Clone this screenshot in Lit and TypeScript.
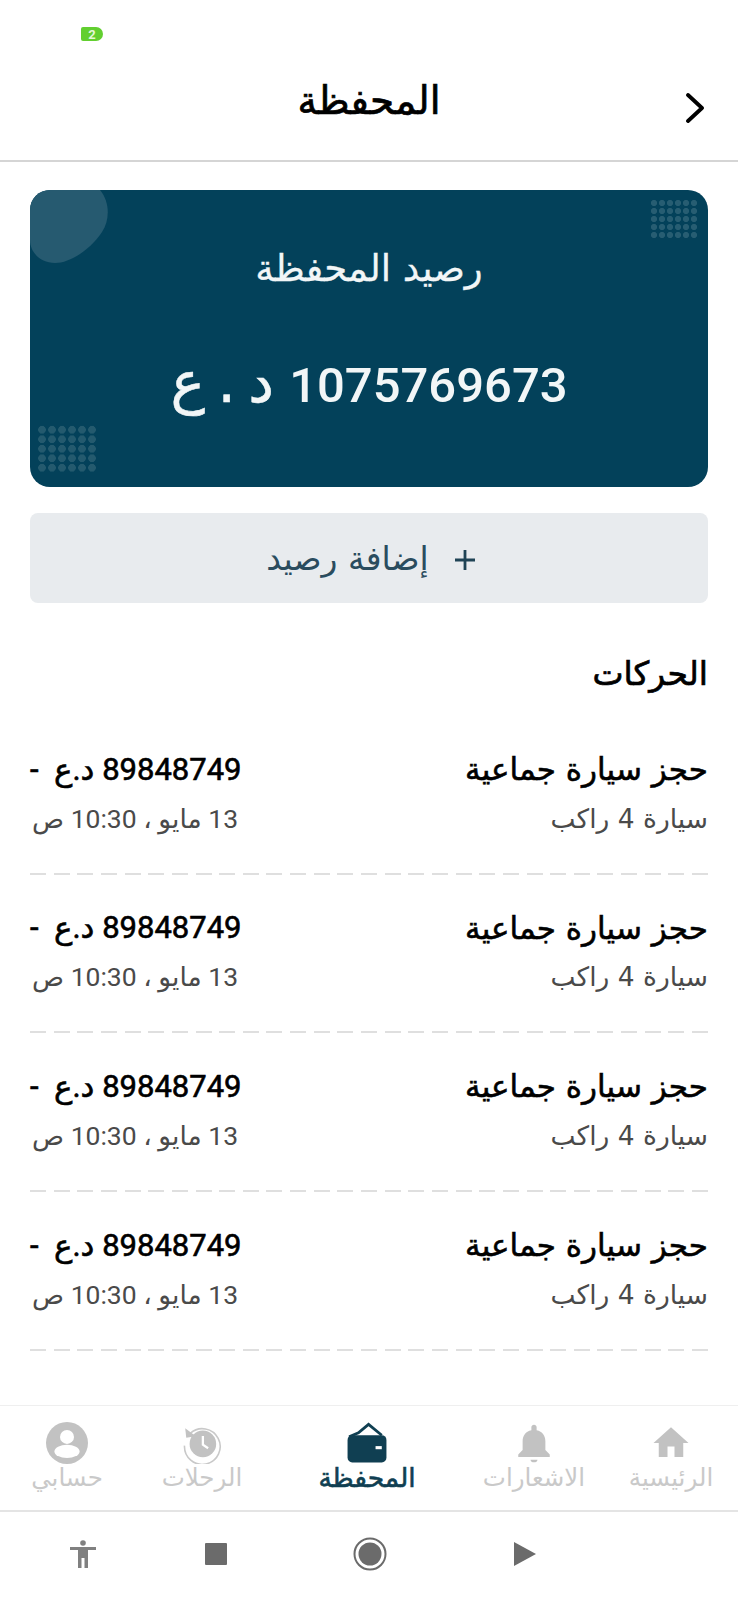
import { LitElement, css, html, svg } from 'lit';

interface Movement {
  title: string;
  detail: string;
  amount: string;
  when: string;
}

const MOVEMENTS: Movement[] = Array.from({ length: 4 }, () => ({
  title: 'حجز سيارة جماعية',
  detail: 'سيارة 4 راكب',
  amount: '89848749 د.ع  -',
  when: '13 مايو ، 10:30 ص'
}));

const ICONS = {
  home: svg`<path d="M10 20v-6h4v6h5v-8h3L12 3 2 12h3v8z"/>`,
  bell: svg`<path d="M12 23c1.100 0 2-.6 2-1.500h-4c0 .9.9 1.500 2 1.500zm6.500-7v-5c0-3.070-1.630-5.640-5-6.320V3c0-.83-.67-1.500-1.500-1.500s-1.500.67-1.500 1.500v1.680C7.140 5.360 5.500 7.920 5.500 11v5L3 18.500v1.500h18v-1.500z"/>`,
  wallet: svg`
    <path d="M2 9l6-2.500L14.500 1 23 8" fill="none" stroke="currentColor" stroke-width="1.800"/>
    <rect x="1" y="8" width="25" height="17.500" rx="3"/>
    <rect x="19" y="15" width="4" height="2" fill="#fff"/>`,
  history: svg`
    <path d="M5.300 6.500A10.200 10.200 0 1 1 2 13.500" fill="none" stroke="currentColor" stroke-width="0.900"/>
    <path d="M2.400 3.500l.6 5.500 5.500-.8z"/>
    <circle cx="12.500" cy="12.500" r="7.600"/>
    <path d="M12.500 8v5l3 2" fill="none" stroke="#fff" stroke-width="1.300"/>`,
  account: svg`
    <circle cx="12" cy="12" r="12"/>
    <circle cx="12" cy="8.500" r="4" fill="#fff"/>
    <ellipse cx="12" cy="16.800" rx="7.200" ry="3.800" fill="#fff"/>`
};

const TABS = [
  { label: 'الرئيسية', icon: ICONS.home, box: '0 0 24 24' },
  { label: 'الاشعارات', icon: ICONS.bell, box: '0 0 24 24' },
  { label: 'المحفظة', icon: ICONS.wallet, box: '0 0 27 26', active: true },
  { label: 'الرحلات', icon: ICONS.history, box: '0 0 24 24' },
  { label: 'حسابي', icon: ICONS.account, box: '0 0 24 24' }
];

export class AppRoot extends LitElement {
  public static override styles = css`
    :host {
      display: block;
      width: 738px;
      height: 1600px;
      background: #fff;
      font-family: 'DejaVu Sans', sans-serif;
      color: #000;
    }

    .page {
      display: flex;
      flex-direction: column;
      height: 1600px;
      direction: rtl;
      overflow: hidden;
    }

    .status {
      height: 60px;
      direction: ltr;
      padding: 27px 0 0 81px;
      box-sizing: border-box;
    }

    .status-dot {
      display: flex;
      align-items: center;
      justify-content: center;
      width: 22px;
      height: 14px;
      border-radius: 2px 7px 7px 2px;
      background: #62cf30;
      color: #e4f7da;
      font: 700 13px 'Roboto', sans-serif;
    }

    .header {
      position: relative;
      height: 102px;
      display: flex;
      align-items: center;
      justify-content: center;
      padding-bottom: 18px;
      box-sizing: border-box;
      border-bottom: 2px solid #d5d5d5;
    }

    .header h1 {
      margin: 0;
      font-size: 39px;
      line-height: 46px;
      font-weight: 400;
      -webkit-text-stroke: 0.7px #000;
    }

    .back {
      position: absolute;
      right: 33px;
      top: 33px;
      width: 20px;
      height: 30px;
    }

    .content {
      padding: 28px 30px 0;
    }

    .card {
      position: relative;
      height: 297px;
      border-radius: 20px;
      background: #03415a;
      color: #f2f6f7;
      overflow: hidden;
      display: flex;
      flex-direction: column;
      align-items: center;
    }

    .blob {
      position: absolute;
      left: 0;
      top: 0;
      width: 80px;
      height: 75px;
      fill: #265a70;
    }

    .dots {
      position: absolute;
    }

    .dots.top {
      right: 10px;
      top: 9px;
      width: 48px;
      height: 40px;
      background-image: radial-gradient(circle, #275d72 2.800px, transparent 3.200px);
      background-size: 8px 8px;
    }

    .dots.bottom {
      left: 7px;
      bottom: 15px;
      width: 60px;
      height: 47.500px;
      background-image: radial-gradient(circle, #245a6e 3.600px, transparent 4px);
      background-size: 10px 9.500px;
    }

    .card-label {
      margin-top: 56px;
      font-size: 37px;
      line-height: 46px;
      -webkit-text-stroke: 0.3px #f2f6f7;
    }

    .card-amount {
      margin-top: 55px;
      display: flex;
      align-items: baseline;
      gap: 15px;
      line-height: 70px;
    }

    .card-amount b {
      font: 500 49px/70px 'Roboto', sans-serif;
    }

    .card-amount span {
      font-size: 58px;
      word-spacing: -6px;
      -webkit-text-stroke: 0.5px #f2f6f7;
    }

    .add {
      margin-top: 26px;
      height: 90px;
      padding-left: 4px;
      border-radius: 8px;
      background: #e8ebee;
      color: #2a4c5e;
      display: flex;
      align-items: center;
      justify-content: center;
      gap: 25px;
      font-size: 33px;
    }

    .add svg {
      width: 22px;
      height: 22px;
      margin-top: 4px;
    }

    .section-title {
      margin: 48px 0 0;
      font-size: 33px;
      line-height: 46px;
      font-weight: 400;
      -webkit-text-stroke: 0.7px #000;
    }

    .movements {
      margin-top: 30px;
    }

    .movement {
      height: 158.700px;
      box-sizing: border-box;
      padding-top: 21px;
      display: flex;
      flex-direction: column;
    }

    .line {
      display: flex;
      justify-content: space-between;
      align-items: center;
    }

    .line.main {
      height: 42px;
      font-size: 31px;
      -webkit-text-stroke: 0.6px #000;
    }

    .line.sub {
      height: 42px;
      margin-top: 7px;
      font-size: 26.500px;
      color: #4a4a4a;
      padding-left: 2px;
    }

    .num {
      white-space: pre;
      font-family: 'Roboto', 'DejaVu Sans', sans-serif;
    }

    .dash {
      margin-top: auto;
      height: 2px;
      background: repeating-linear-gradient(to left, #dfdfdf 0 16px, transparent 16px 23.640px);
      margin-bottom: 11px;
    }

    .tabs {
      margin-top: auto;
      display: grid;
      grid-template-columns: 134px 140px 194px 136px 134px;
      height: 107px;
      box-sizing: border-box;
      border-top: 1px solid #efefef;
      border-bottom: 2px solid #e4e4e4;
    }

    .tab {
      display: flex;
      flex-direction: column;
      align-items: center;
      padding-top: 16px;
      color: #c9c9c9;
      font-size: 24.500px;
      line-height: 28px;
    }

    .tab svg {
      width: 42px;
      height: 42px;
      fill: #c2c2c2;
    }

    .tab.active {
      color: #103f52;
      font-size: 26.500px;
      -webkit-text-stroke: 0.6px #103f52;
    }

    .tab.active svg {
      fill: currentColor;
    }

    .system {
      direction: ltr;
      display: grid;
      grid-template-columns: 166px 100px 208px 102px;
      align-items: center;
      justify-items: center;
      height: 88.500px;
      padding-bottom: 3px;
      box-sizing: border-box;
      color: #6b6b6b;
    }

    .system svg {
      fill: currentColor;
    }

    .figure {
      color: #808080;
    }
  `;

  public override render() {
    return html`
      <div class="page">
        <div class="status"><div class="status-dot">2</div></div>
        <header class="header">
          <h1>المحفظة</h1>
          <svg class="back" viewBox="0 0 20 30" fill="none" stroke="#000" stroke-width="3.800" stroke-linecap="round" stroke-linejoin="round">
            <path d="M3 2l14 13L3 28"/>
          </svg>
        </header>

        <main class="content">
          <section class="card">
            <svg class="blob" viewBox="0 0 80 75"><path d="M0 0H70C80 12 80 30 72 42 60 60 40 73 25 73 10 73 0 62 0 50Z"/></svg>
            <div class="dots top"></div>
            <div class="dots bottom"></div>
            <div class="card-label">رصيد المحفظة</div>
            <div class="card-amount"><b>1075769673</b><span>د . ع</span></div>
          </section>

          <div class="add">
            <svg viewBox="0 0 22 22" fill="none" stroke="#1f4355" stroke-width="2.800"><path d="M11 1v20M1 11h20"/></svg>
            <span>إضافة رصيد</span>
          </div>

          <h2 class="section-title">الحركات</h2>

          <div class="movements">
            ${MOVEMENTS.map(
              (item) => html`
                <div class="movement">
                  <div class="line main"><span>${item.title}</span><span class="num">${item.amount}</span></div>
                  <div class="line sub"><span>${item.detail}</span><span class="num">${item.when}</span></div>
                  <div class="dash"></div>
                </div>
              `
            )}
          </div>
        </main>

        <nav class="tabs">
          ${TABS.map(
            (tab) => html`
              <div class="tab ${tab.active ? 'active' : ''}">
                <svg viewBox=${tab.box}>${tab.icon}</svg>
                <span>${tab.label}</span>
              </div>
            `
          )}
        </nav>

        <div class="system">
          <svg class="figure" width="26" height="28" viewBox="0 0 26 28">
            <circle cx="13" cy="3" r="2.800"/>
            <path d="M0 7h26v3h-8v18h-3.500V18h-3v10H8V10H0z"/>
          </svg>
          <svg width="22" height="22" viewBox="0 0 22 22"><rect width="22" height="22" rx="1"/></svg>
          <svg width="34" height="34" viewBox="0 0 34 34">
            <circle cx="17" cy="17" r="15.500" fill="none" stroke="currentColor" stroke-width="2"/>
            <circle cx="17" cy="17" r="11.500"/>
          </svg>
          <svg width="22" height="24" viewBox="0 0 22 24"><path d="M0 0l22 12L0 24z"/></svg>
        </div>
      </div>
    `;
  }
}

if (!customElements.get('app-root')) {
  customElements.define('app-root', AppRoot);
}
